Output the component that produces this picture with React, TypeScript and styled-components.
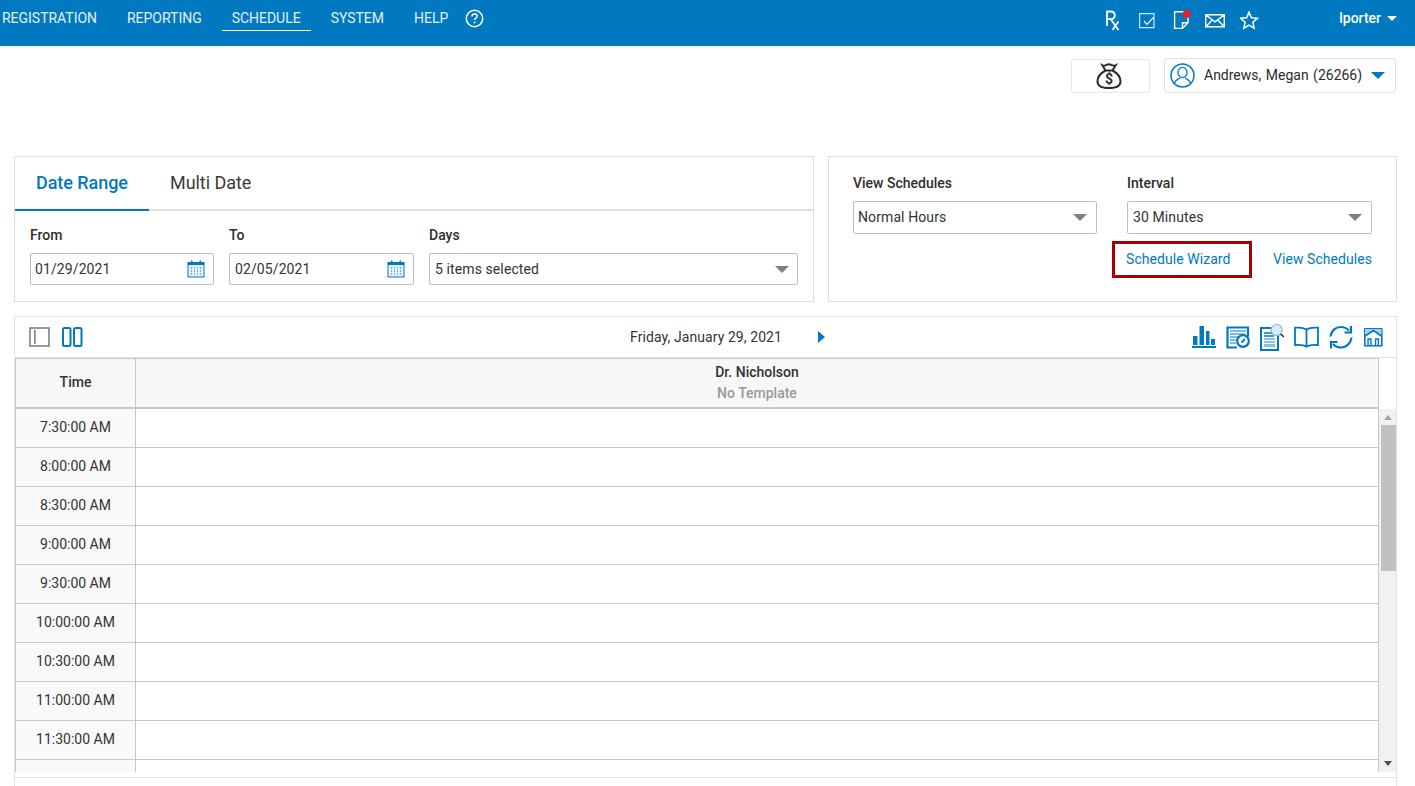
import React, { FunctionComponent } from 'react';
import styled, { createGlobalStyle } from 'styled-components';

const BLUE = '#0079c1';

const GlobalStyle = createGlobalStyle`
    html, body {
        margin: 0;
        height: 786px;
        overflow: hidden;
        background: #fff;
        font-family: Roboto, "Liberation Sans", sans-serif;
        color: #333;
    }
    * {
        box-sizing: border-box;
    }
`;

const TopBar = styled.header`
    display: flex;
    justify-content: space-between;
    height: 46px;
    background: ${BLUE};
    color: #fff;
`;

const Nav = styled.nav`
    display: flex;
    align-items: flex-start;
    padding-left: 2px;
`;

const NavItem = styled.a<{ $active?: boolean }>`
    display: block;
    height: 31px;
    margin-right: ${p => (p.$active ? '20px' : '30px')};
    margin-left: ${p => (p.$active ? '-10px' : '0')};
    padding: ${p => (p.$active ? '10px 10px 0' : '10px 0 0')};
    font-size: 14px;
    line-height: 17px;
    letter-spacing: -0.02px;
    color: #e3f0f8;
    border-bottom: ${p => (p.$active ? '1px solid #fff' : 'none')};
`;

const HelpIcon = styled.svg`
    width: 19px;
    height: 19px;
    margin: 9px 0 0 -13px;
`;

const TopRight = styled.div`
    display: flex;
    align-items: flex-start;
    padding-right: 18px;
`;

const TopIcons = styled.div`
    display: flex;
    align-items: flex-start;
    gap: 14px;
    padding: 9px 80px 0 0;
`;

const UserName = styled.div`
    display: flex;
    align-items: center;
    gap: 6px;
    padding-top: 10px;
    font-size: 14px;
    line-height: 17px;
    font-weight: 500;
`;

const Caret = styled.span<{ $color: string; $w: number; $h: number }>`
    display: inline-block;
    width: 0;
    height: 0;
    border-left: ${p => p.$w}px solid transparent;
    border-right: ${p => p.$w}px solid transparent;
    border-top: ${p => p.$h}px solid ${p => p.$color};
`;

const SubBar = styled.div`
    display: flex;
    justify-content: flex-end;
    gap: 14px;
    height: 110px;
    padding: 12px 19px 0 0;
`;

const MoneyButton = styled.div`
    display: flex;
    align-items: center;
    justify-content: center;
    width: 79px;
    height: 34px;
    margin-top: 1px;
    padding-right: 3px;
    border: 1px solid #e6e6e6;
    border-radius: 3px;
`;

const PatientButton = styled.div`
    display: flex;
    align-items: center;
    width: 232px;
    height: 35px;
    padding: 0 0 0 5px;
    border: 1px solid #e0e0e0;
    border-radius: 3px;
    font-size: 14px;
    color: #2b2b2b;
`;

const PatientName = styled.span`
    margin: 0 9px 2px 9px;
    word-spacing: 1px;
`;

const Filters = styled.section`
    display: flex;
    gap: 14px;
    padding: 0 18px 0 14px;
`;

const Panel = styled.div<{ $width: number }>`
    width: ${p => p.$width}px;
    height: 146px;
    border: 1px solid #dedede;
    background: #fff;
`;

const Tabs = styled.div`
    display: flex;
    height: 54px;
    border-bottom: 2px solid #dfe3e6;
`;

const Tab = styled.div<{ $active?: boolean }>`
    height: 54px;
    padding: 15px ${p => (p.$active ? '21px' : '0')} 0;
    margin-left: ${p => (p.$active ? '0' : '21px')};
    font-size: 18px;
    line-height: 21px;
    letter-spacing: -0.05px;
    font-weight: ${p => (p.$active ? 500 : 400)};
    color: ${p => (p.$active ? BLUE : '#3a3a3a')};
    border-bottom: ${p => (p.$active ? `2px solid ${BLUE}` : 'none')};
`;

const DateFields = styled.div`
    display: flex;
    gap: 15px;
    padding: 16px 15px 0;
`;

const Field = styled.div<{ $width: number }>`
    width: ${p => p.$width}px;
`;

const Label = styled.div`
    height: 17px;
    margin-bottom: 9px;
    font-size: 14px;
    line-height: 17px;
    font-weight: 500;
    color: #2e2e2e;
`;

const InputBox = styled.div<{ $tall?: boolean; $tight?: boolean }>`
    display: flex;
    align-items: center;
    justify-content: space-between;
    height: ${p => (p.$tall ? '33px' : '32px')};
    padding: 0 ${p => (p.$tall ? '9px' : '8px')} ${p => (p.$tall ? '1px' : '0')} ${p => (p.$tight ? '4px' : '5px')};
    border: 1px solid #bdbdbd;
    border-radius: 2px;
    font-size: 14px;
    color: #333;
    letter-spacing: 0.1px;
`;

const ScheduleOptions = styled.div`
    padding: 18px 24px 0;
`;

const OptionFields = styled.div`
    display: flex;
    gap: 30px;
`;

const Links = styled.div`
    display: flex;
    justify-content: flex-end;
    align-items: center;
    margin-top: 7px;
`;

const WizardLink = styled.a`
    display: block;
    width: 140px;
    height: 37px;
    margin-right: 21px;
    padding: 7px 0 0 11px;
    border: 3px solid #a80000;
    color: ${BLUE};
    font-size: 14px;
    line-height: 17px;
    letter-spacing: 0.05px;
`;

const PlainLink = styled.a`
    color: ${BLUE};
    font-size: 14px;
    line-height: 17px;
    letter-spacing: 0.05px;
`;

const Calendar = styled.section`
    position: relative;
    margin: 14px 18px 0 14px;
    height: 480px;
    border: 1px solid #e3e3e3;
    border-bottom: none;
`;

const CalendarToolbar = styled.div`
    display: grid;
    grid-template-columns: 1fr auto 1fr;
    align-items: center;
    height: 41px;
    padding: 0 13px 0 14px;
    border-bottom: 1px solid #e3e3e3;
`;

const ToolGroup = styled.div<{ $right?: boolean }>`
    display: flex;
    align-items: center;
    justify-content: ${p => (p.$right ? 'flex-end' : 'flex-start')};
    gap: ${p => (p.$right ? '10px' : '12px')};
`;

const DateNav = styled.div`
    display: flex;
    align-items: center;
    gap: 36px;
    font-size: 14px;
    letter-spacing: 0.08px;
    color: #333;
    margin-left: 47px;
    padding-right: 4px;
`;

const NextArrow = styled.span`
    width: 0;
    height: 0;
    border-top: 6px solid transparent;
    border-bottom: 6px solid transparent;
    border-left: 7px solid ${BLUE};
`;

const GridWrap = styled.div`
    display: flex;
    height: 414px;
`;

const Grid = styled.div`
    width: 1364px;
    overflow: hidden;
    border-left: 1px solid #c8c8c8;
    border-right: 1px solid #c8c8c8;
`;

const HeadRow = styled.div`
    display: flex;
    height: 51px;
    background: #f7f7f7;
    border-top: 1px solid #c8c8c8;
    border-bottom: 2px solid #c8c8c8;
`;

const TimeHead = styled.div`
    display: flex;
    align-items: center;
    justify-content: center;
    width: 120px;
    padding-bottom: 3px;
    border-right: 1px solid #c8c8c8;
    font-size: 14px;
    font-weight: 500;
`;

const DoctorHead = styled.div`
    flex: 1;
    padding-top: 3px;
    text-align: center;
    font-size: 14px;
    line-height: 21px;
    font-weight: 500;
`;

const NoTemplate = styled.div`
    color: #999;
`;

const Row = styled.div`
    display: flex;
    height: 39px;
    border-bottom: 1px solid #c8c8c8;
`;

const TimeCell = styled.div`
    display: flex;
    align-items: center;
    justify-content: center;
    width: 120px;
    padding-bottom: 2px;
    background: #f9f9f9;
    border-right: 1px solid #c8c8c8;
    font-size: 14px;
    color: #333;
`;

const Scrollbar = styled.div`
    display: flex;
    flex-direction: column;
    align-items: center;
    width: 17px;
    margin-top: 51px;
    background: #f1f1f1;
`;

const ScrollUp = styled.span`
    margin-top: 6px;
    border-left: 4px solid transparent;
    border-right: 4px solid transparent;
    border-bottom: 5px solid #a3a3a3;
`;

const ScrollThumb = styled.div`
    width: 15px;
    height: 146px;
    margin: 5px 0 0 2px;
    background: #c1c1c1;
`;

const ScrollDown = styled.span`
    margin-top: auto;
    margin-bottom: 6px;
    border-left: 4px solid transparent;
    border-right: 4px solid transparent;
    border-top: 5px solid #505050;
`;

const Footer = styled.div`
    height: 1px;
    margin-top: 5px;
    background: #e3e3e3;
`;

const CalendarIcon: FunctionComponent = () => (
    <svg width="18" height="18" viewBox="0 0 18 18">
        <rect x="1" y="2.5" width="16" height="14.5" fill="#e4f1f9" stroke={BLUE} />
        <rect x="1" y="2" width="16" height="3" fill={BLUE} />
        <rect x="4" y="0.5" width="1.5" height="3" fill={BLUE} />
        <rect x="12.5" y="0.5" width="1.5" height="3" fill={BLUE} />
        <path
            d="M4 8h1M7 8h1M10 8h1M13 8h1M4 11h1M7 11h1M10 11h1M13 11h1M4 14h1M7 14h1M10 14h1M13 14h1"
            stroke={BLUE}
            strokeWidth="1.2"
        />
    </svg>
);

const times = [
    '7:30:00 AM',
    '8:00:00 AM',
    '8:30:00 AM',
    '9:00:00 AM',
    '9:30:00 AM',
    '10:00:00 AM',
    '10:30:00 AM',
    '11:00:00 AM',
    '11:30:00 AM',
    '',
];

const App: FunctionComponent = () => (
    <>
        <GlobalStyle />
        <TopBar>
            <Nav>
                <NavItem>REGISTRATION</NavItem>
                <NavItem>REPORTING</NavItem>
                <NavItem $active>SCHEDULE</NavItem>
                <NavItem>SYSTEM</NavItem>
                <NavItem>HELP</NavItem>
                <HelpIcon viewBox="0 0 19 19">
                    <circle cx="9.5" cy="9.5" r="8.2" fill="none" stroke="#fff" strokeWidth="1.5" />
                    <path
                        d="M7 7.6c0-1.6 1.1-2.5 2.6-2.5s2.5.9 2.5 2.2c0 1.9-2.5 1.9-2.5 3.8"
                        fill="none"
                        stroke="#fff"
                        strokeWidth="1.5"
                    />
                    <rect x="8.8" y="12.6" width="1.6" height="1.7" fill="#fff" />
                </HelpIcon>
            </Nav>
            <TopRight>
                <TopIcons>
                    <svg width="19" height="22" viewBox="0 0 19 22">
                        <path
                            d="M3 17V2.500h3.800c2.600 0 4 1.500 4 3.800s-1.400 3.900-4 3.900H3M6.800 10.200l7.700 10.800M14.500 12.500l-6 8.500"
                            fill="none"
                            stroke="#fff"
                            strokeWidth="1.800"
                        />
                    </svg>
                    <svg width="20" height="22" viewBox="0 0 20 22">
                        <path d="M2.600 4.600h14.400v14H2.600z" fill="none" stroke="#cfe6f4" strokeWidth="1.200" />
                        <path d="M7 12l3 3.300 6.500-7" fill="none" stroke="#fff" strokeWidth="1.200" />
                    </svg>
                    <svg width="20" height="22" viewBox="0 0 20 22">
                        <path
                            d="M3.600 2.800h13.400v11L11.500 19.400H3.600zM17 13.800h-5.500v5.600"
                            fill="none"
                            stroke="#fff"
                            strokeWidth="1.400"
                        />
                        <circle cx="15.700" cy="5" r="4" fill="#e8202a" />
                    </svg>
                    <svg width="21" height="22" viewBox="0 0 21 22">
                        <path
                            d="M.7 5.700h18.600v12H.7zM1 6l9 6.800L19 6M1 17.400l6.500-6.600M19 17.400l-6.500-6.600"
                            fill="none"
                            stroke="#fff"
                            strokeWidth="1.400"
                        />
                    </svg>
                    <svg width="19" height="22" viewBox="0 0 19 22">
                        <path
                            d="M9 3.200l2.400 5.500 6 .6-4.500 4 1.300 5.900-5.200-3-5.200 3 1.300-5.900-4.500-4 6-.6z"
                            fill="none"
                            stroke="#fff"
                            strokeWidth="1.500"
                        />
                    </svg>
                </TopIcons>
                <UserName>
                    lporter
                    <Caret $color="#fff" $w={5} $h={5} />
                </UserName>
            </TopRight>
        </TopBar>
        <SubBar>
            <MoneyButton>
                <svg width="26" height="26" viewBox="0 0 26 26">
                    <path
                        d="M9.500 7.500C4 10.500 1.500 14.500 1.500 18.500c0 3.800 3.500 6.500 11.500 6.500s11.500-2.700 11.500-6.500c0-4-2.500-8-8-11"
                        fill="none"
                        stroke="#2b2b2b"
                        strokeWidth="2"
                    />
                    <path
                        d="M9 7.500h8M9.500 7.500L6.500 2.500c2 1 4-1.200 6.500-1.200s4.500 2.200 6.500 1.200l-3 5"
                        fill="none"
                        stroke="#2b2b2b"
                        strokeWidth="2"
                    />
                    <text x="13" y="21" textAnchor="middle" fontSize="14" fontWeight="700" fill="#2b2b2b">
                        $
                    </text>
                </svg>
            </MoneyButton>
            <PatientButton>
                <svg width="25" height="25" viewBox="0 0 25 25">
                    <circle cx="12.500" cy="12.500" r="11.500" fill="none" stroke={BLUE} strokeWidth="1.500" />
                    <ellipse cx="12.500" cy="9.500" rx="4.500" ry="5.200" fill="none" stroke={BLUE} strokeWidth="1.300" />
                    <path
                        d="M4.500 20.500c.6-3.500 3.500-4.500 5.500-5.500M20.500 20.500c-.6-3.500-3.500-4.500-5.500-5.500"
                        fill="none"
                        stroke={BLUE}
                        strokeWidth="1.300"
                    />
                </svg>
                <PatientName>Andrews, Megan (26266)</PatientName>
                <Caret $color={BLUE} $w={7} $h={7} />
            </PatientButton>
        </SubBar>
        <Filters>
            <Panel $width={800}>
                <Tabs>
                    <Tab $active>Date Range</Tab>
                    <Tab>Multi Date</Tab>
                </Tabs>
                <DateFields>
                    <Field $width={184}>
                        <Label>From</Label>
                        <InputBox $tight>
                            01/29/2021
                            <CalendarIcon />
                        </InputBox>
                    </Field>
                    <Field $width={185}>
                        <Label>To</Label>
                        <InputBox>
                            02/05/2021
                            <CalendarIcon />
                        </InputBox>
                    </Field>
                    <Field $width={369}>
                        <Label>Days</Label>
                        <InputBox>
                            5 items selected
                            <Caret $color="#808080" $w={7} $h={7} />
                        </InputBox>
                    </Field>
                </DateFields>
            </Panel>
            <Panel $width={569}>
                <ScheduleOptions>
                    <OptionFields>
                        <Field $width={244}>
                            <Label>View Schedules</Label>
                            <InputBox $tall $tight>
                                Normal Hours
                                <Caret $color="#808080" $w={7} $h={7} />
                            </InputBox>
                        </Field>
                        <Field $width={245}>
                            <Label>Interval</Label>
                            <InputBox $tall>
                                30 Minutes
                                <Caret $color="#808080" $w={7} $h={7} />
                            </InputBox>
                        </Field>
                    </OptionFields>
                    <Links>
                        <WizardLink>Schedule Wizard</WizardLink>
                        <PlainLink>View Schedules</PlainLink>
                    </Links>
                </ScheduleOptions>
            </Panel>
        </Filters>
        <Calendar>
            <CalendarToolbar>
                <ToolGroup>
                    <svg width="21" height="20" viewBox="0 0 21 20">
                        <rect x="1" y="1" width="19" height="18" fill="none" stroke="#808080" strokeWidth="1.600" />
                        <rect x="5" y="3" width="1.600" height="14" fill="#808080" />
                    </svg>
                    <svg width="21" height="20" viewBox="0 0 21 20">
                        <rect x="1" y="1" width="7.500" height="18" rx="1.500" fill="none" stroke={BLUE} strokeWidth="2" />
                        <rect x="12" y="1" width="7.500" height="18" rx="1.500" fill="none" stroke={BLUE} strokeWidth="2" />
                    </svg>
                </ToolGroup>
                <DateNav>
                    Friday, January 29, 2021
                    <NextArrow />
                </DateNav>
                <ToolGroup $right>
                    <svg width="24" height="28" viewBox="0 0 24 28">
                        <path d="M0 24h24" stroke={BLUE} strokeWidth="2" />
                        <path d="M1 13h4.500v9H1zM7.500 3H12v19H7.500zM14 8h3.500v14H14zM19 16h4v6h-4z" fill={BLUE} />
                    </svg>
                    <svg width="24" height="28" viewBox="0 0 24 28">
                        <path d="M11 24.500H1.500V4.500h20.500v9" fill="none" stroke={BLUE} strokeWidth="2.200" />
                        <path d="M4 8h16M4 11h15M4 14h9M4 17h7M4 20h6" stroke={BLUE} strokeWidth="1.200" />
                        <circle cx="17" cy="18" r="5.800" fill="#fff" stroke={BLUE} strokeWidth="2.200" />
                        <path d="M15.500 19.500l3.500-3.500" fill="none" stroke={BLUE} strokeWidth="1.800" />
                    </svg>
                    <svg width="24" height="28" viewBox="0 0 24 28">
                        <rect x="1" y="5" width="17" height="22" fill="#fff" stroke={BLUE} strokeWidth="2" />
                        <path d="M4 10h8M4 13h10" stroke={BLUE} strokeWidth="1.300" />
                        <rect x="4" y="15" width="11" height="9" fill="#8dc2e3" />
                        <path d="M4 17.500h11M4 20.500h11" stroke="#fff" strokeWidth="1" />
                        <circle cx="16.700" cy="7" r="5.500" fill="#d8ecf7" stroke="#7db9de" strokeWidth="1.200" />
                        <path d="M20.500 11l3.500 3" stroke="#222" strokeWidth="1.600" />
                    </svg>
                    <svg width="25" height="28" viewBox="0 0 25 28">
                        <path
                            d="M12.500 6.500C10 4.800 5.500 4.300 1 4.700V22c4.500-.4 9 0 11.500 1.500C15 22 19.500 21.600 24 22V4.700c-4.500-.4-9 .1-11.500 1.800zM12.500 6.500v18"
                            fill="none"
                            stroke={BLUE}
                            strokeWidth="1.800"
                        />
                    </svg>
                    <svg width="24" height="28" viewBox="0 0 24 28">
                        <path
                            d="M1.500 13.500C2 8 6.500 4 12 4c3.300 0 6 1.500 8 3.600M22.500 14.500C22 20 17.500 24.500 12 24.500c-3.300 0-6-1.500-8-3.600"
                            fill="none"
                            stroke={BLUE}
                            strokeWidth="2.200"
                        />
                        <path d="M22 3v6.500h-6.500M2 25.500V19h6.500" fill="none" stroke={BLUE} strokeWidth="2.200" />
                    </svg>
                    <svg width="20" height="28" viewBox="0 0 20 28">
                        <path d="M1.800 5.800h17v17h-17z" fill="#fff" stroke={BLUE} strokeWidth="1.600" />
                        <path d="M2 6h16.500v5.500L10.300 7.500 2 11.500z" fill="#a9d3ec" />
                        <path d="M2 13l8.300-5.500L18.500 13" fill="none" stroke={BLUE} strokeWidth="1.700" />
                        <path d="M5 22v-6h3v6M12.500 22v-6h3v6" fill="#d8ecf7" stroke={BLUE} strokeWidth="1.300" />
                    </svg>
                </ToolGroup>
            </CalendarToolbar>
            <GridWrap>
                <Grid>
                    <HeadRow>
                        <TimeHead>Time</TimeHead>
                        <DoctorHead>
                            Dr. Nicholson
                            <NoTemplate>No Template</NoTemplate>
                        </DoctorHead>
                    </HeadRow>
                    {times.map((time, i) => (
                        <Row key={i}>
                            <TimeCell>{time}</TimeCell>
                        </Row>
                    ))}
                </Grid>
                <Scrollbar>
                    <ScrollUp />
                    <ScrollThumb />
                    <ScrollDown />
                </Scrollbar>
            </GridWrap>
            <Footer />
        </Calendar>
    </>
);

export default App;
